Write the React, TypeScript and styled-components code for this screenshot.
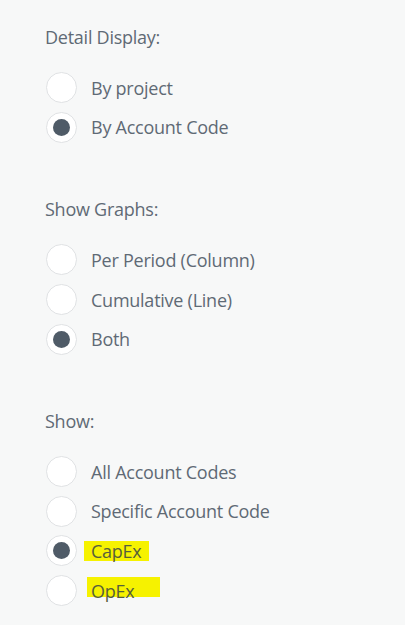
import { createGlobalStyle } from 'styled-components'
import styled from 'styled-components'

const GlobalStyle = createGlobalStyle`
  html, body {
    margin: 0;
    padding: 0;
    background: #f7f8f8;
  }
  body {
    font-family: "Open Sans", "Noto Sans", sans-serif;
  }
`

const Panel = styled.div`
  display: flex;
  flex-direction: column;
  gap: 51px;
  padding: 26px 0 0 45px;
  width: 405px;
  height: 625px;
  box-sizing: border-box;
  background: #f7f8f8;
`

const Group = styled.div`
  display: flex;
  flex-direction: column;
`

const Heading = styled.div`
  font-size: 18px;
  color: #5f6a75;
  line-height: 22px;
  margin-bottom: 20px;
  letter-spacing: -0.25px;
`

const Option = styled.label`
  display: flex;
  align-items: center;
  gap: 14px;
  height: 39.6px;
  margin-left: 1px;
`

const Circle = styled.span<{ $on: boolean }>`
  width: 31px;
  height: 31px;
  border-radius: 50%;
  box-sizing: border-box;
  border: 1.5px solid #e0e2e4;
  background: #ffffff;
  display: flex;
  align-items: center;
  justify-content: center;
  flex-shrink: 0;

  &::after {
    content: '';
    display: ${(p) => (p.$on ? 'block' : 'none')};
    width: 17px;
    height: 17px;
    border-radius: 50%;
    background: #4f5b67;
  }
`

const Label = styled.span`
  font-size: 18px;
  color: #5f6a75;
  letter-spacing: -0.25px;
  display: flex;
  align-items: center;
`

const Mark = styled.span<{ $left: number; $right: number; $shift: number }>`
  display: inline-flex;
  align-items: center;
  height: 20px;
  background: #f6f200;
  padding: 0 ${(p) => p.$right}px 0 ${(p) => p.$left}px;
  margin-left: ${(p) => -p.$left}px;
  transform: translateY(${(p) => p.$shift}px);
  color: #56603c;
`

const MarkText = styled.span<{ $shift: number }>`
  transform: translateY(${(p) => -p.$shift}px);
`

type Opt = { label: string; on?: boolean; mark?: { left: number; right: number; shift: number } }

const groups: { title: string; options: Opt[] }[] = [
  {
    title: 'Detail Display:',
    options: [{ label: 'By project' }, { label: 'By Account Code', on: true }],
  },
  {
    title: 'Show Graphs:',
    options: [
      { label: 'Per Period (Column)' },
      { label: 'Cumulative (Line)' },
      { label: 'Both', on: true },
    ],
  },
  {
    title: 'Show:',
    options: [
      { label: 'All Account Codes' },
      { label: 'Specific Account Code' },
      { label: 'CapEx', on: true, mark: { left: 7, right: 7, shift: 0 } },
      { label: 'OpEx', mark: { left: 4, right: 26, shift: -4 } },
    ],
  },
]

export default function App() {
  return (
    <>
      <GlobalStyle />
      <Panel>
        {groups.map((g) => (
          <Group key={g.title}>
            <Heading>{g.title}</Heading>
            {g.options.map((o) => (
              <Option key={o.label}>
                <Circle $on={!!o.on} />
                <Label>
                  {o.mark ? (
                    <Mark $left={o.mark.left} $right={o.mark.right} $shift={o.mark.shift}>
                      <MarkText $shift={o.mark.shift}>{o.label}</MarkText>
                    </Mark>
                  ) : (
                    o.label
                  )}
                </Label>
              </Option>
            ))}
          </Group>
        ))}
      </Panel>
    </>
  )
}
